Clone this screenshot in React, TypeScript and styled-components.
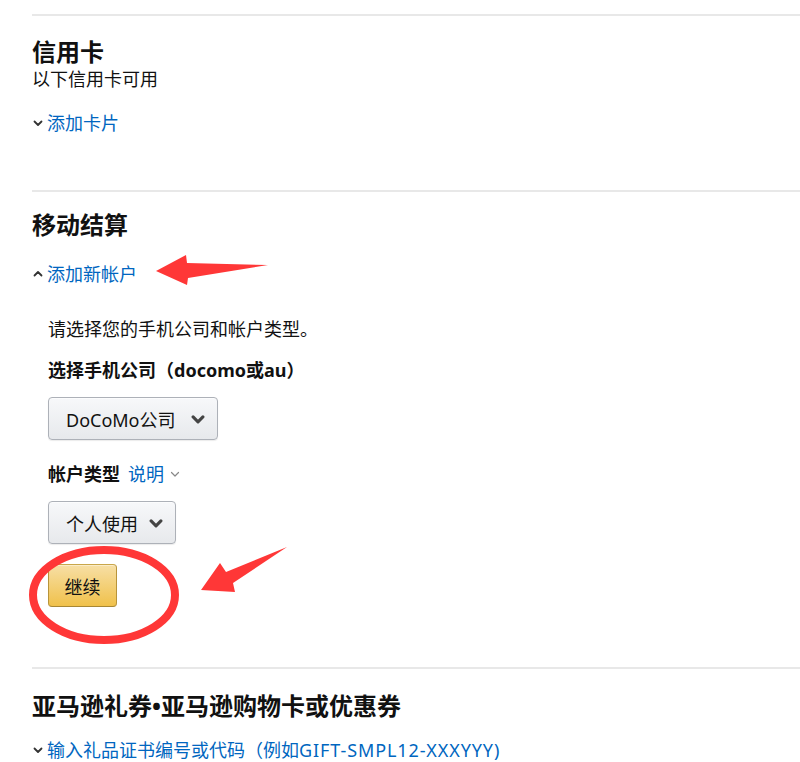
import styled, { createGlobalStyle } from 'styled-components'
import { FC, ReactNode } from 'react'

const GlobalStyle = createGlobalStyle`
  html, body {
    margin: 0;
    padding: 0;
    background: #fff;
  }
  body {
    font-family: 'Noto Sans', 'Noto Sans CJK SC', sans-serif;
    color: #111;
  }
`

const Chevron: FC<{ up?: boolean; size?: number; color?: string; weight?: number }> = ({
  up,
  size = 10,
  color = '#333',
  weight = 1.8
}) => (
  <svg width={size} height={size} viewBox="0 0 10 10" style={{ display: 'block' }}>
    <polyline
      points={up ? '1.5,6.5 5,3 8.5,6.5' : '1.5,3.5 5,7 8.5,3.5'}
      fill="none"
      stroke={color}
      strokeWidth={weight}
      strokeLinecap="round"
      strokeLinejoin="round"
    />
  </svg>
)

type ToggleProps = {
  open?: boolean
  gap: number
  children: ReactNode
}

const Toggle: FC<ToggleProps> = ({ open, gap, children }) => (
  <StyledToggle $gap={gap}>
    <Chevron up={open} />
    <StyledLink>{children}</StyledLink>
  </StyledToggle>
)

const Select: FC<{ label: string; width: number }> = ({ label, width }) => (
  <StyledSelect $width={width}>
    <span>{label}</span>
    <Chevron size={14} color="#444" weight={2.2} />
  </StyledSelect>
)

export default function App() {
  return (
    <>
      <GlobalStyle />
      <StyledPage>
        <StyledSection $top={21} $bottom={55}>
          <StyledTitle>信用卡</StyledTitle>
          <StyledText>以下信用卡可用</StyledText>
          <Toggle gap={20}>添加卡片</Toggle>
        </StyledSection>

        <StyledSection $top={18} $bottom={60}>
          <StyledTitle>移动结算</StyledTitle>
          <Toggle open gap={22}>
            添加新帐户
          </Toggle>
          <StyledPanel>
            <StyledText>请选择您的手机公司和帐户类型。</StyledText>
            <StyledLabel $gap={17}>选择手机公司（docomo或au）</StyledLabel>
            <Select label="DoCoMo公司" width={170} />
            <StyledLabel $gap={22}>
              帐户类型
              <StyledHelp>
                <StyledLink>说明</StyledLink>
                <Chevron size={10} color="#888" weight={1.2} />
              </StyledHelp>
            </StyledLabel>
            <Select label="个人使用" width={128} />
            <StyledButton>继续</StyledButton>
          </StyledPanel>
        </StyledSection>

        <StyledSection $top={22} $bottom={20}>
          <StyledTitle>亚马逊礼券•亚马逊购物卡或优惠券</StyledTitle>
          <Toggle gap={17}>
            输入礼品证书编号或代码（例如<StyledCode>GIFT-SMPL12-XXXYYY)</StyledCode>
          </Toggle>
        </StyledSection>

        <StyledMarks width="800" height="762" viewBox="0 0 800 762">
          <polygon points="156,271 186,255 187,263 268,265 188,278 187,285" fill="#ff3737" />
          <ellipse cx="104" cy="595" rx="71" ry="45" fill="none" stroke="#ff3737" strokeWidth="8" />
          <polygon points="287,547 226,572 220,563 201,590 235,592 233,583" fill="#ff3737" />
        </StyledMarks>
      </StyledPage>
    </>
  )
}

const StyledPage = styled.div`
  position: relative;
  width: 800px;
  height: 762px;
  overflow: hidden;
  padding: 14px 0 0 32px;
  box-sizing: border-box;
`

const StyledSection = styled.section<{ $top: number; $bottom: number }>`
  border-top: 2px solid #e8e8e8;
  padding-top: ${(p) => p.$top}px;
  padding-bottom: ${(p) => p.$bottom}px;
`

const StyledTitle = styled.h2`
  margin: 0;
  font-size: 24px;
  line-height: 30px;
  font-weight: 700;
  color: #111;
`

const StyledText = styled.div`
  font-size: 18px;
  line-height: 24px;
  color: #111;
`

const StyledToggle = styled.div<{ $gap: number }>`
  display: flex;
  align-items: center;
  gap: 4px;
  margin-top: ${(p) => p.$gap}px;
  padding-left: 1px;
  font-size: 18px;
  line-height: 24px;
`

const StyledLink = styled.span`
  color: #0066c0;
`

const StyledCode = styled.span`
  letter-spacing: 0.9px;
`

const StyledPanel = styled.div`
  display: flex;
  flex-direction: column;
  align-items: flex-start;
  padding: 31px 0 0 16px;
`

const StyledLabel = styled.div<{ $gap: number }>`
  display: flex;
  align-items: center;
  margin-top: ${(p) => p.$gap}px;
  margin-bottom: 15px;
  font-size: 18px;
  line-height: 24px;
  font-weight: 700;
`

const StyledHelp = styled.span`
  display: inline-flex;
  align-items: center;
  gap: 6px;
  margin-left: 8px;
  font-weight: 400;
`

const StyledSelect = styled.div<{ $width: number }>`
  display: flex;
  align-items: center;
  justify-content: space-between;
  box-sizing: border-box;
  width: ${(p) => p.$width}px;
  height: 43px;
  padding: 0 12px 0 17px;
  border: 1px solid #adb1b8;
  border-radius: 4px;
  background: linear-gradient(to bottom, #f7f8fa, #e7e9ec);
  box-shadow: 0 1px 0 rgba(255, 255, 255, 0.6) inset, 0 1px 1px rgba(0, 0, 0, 0.08);
  font-size: 18px;
  color: #111;
`

const StyledButton = styled.button`
  margin-top: 20px;
  box-sizing: border-box;
  width: 69px;
  height: 43px;
  padding: 0;
  border: 1px solid;
  border-color: #c9a64a #b8943a #a88734;
  border-radius: 4px;
  background: linear-gradient(to bottom, #f7dfa5, #f0c14b);
  box-shadow: 0 1px 0 rgba(255, 255, 255, 0.4) inset;
  font-family: 'Noto Sans', 'Noto Sans CJK SC', sans-serif;
  font-size: 18px;
  color: #111;
  cursor: pointer;
`

const StyledMarks = styled.svg`
  position: absolute;
  left: 0;
  top: 0;
  pointer-events: none;
`
